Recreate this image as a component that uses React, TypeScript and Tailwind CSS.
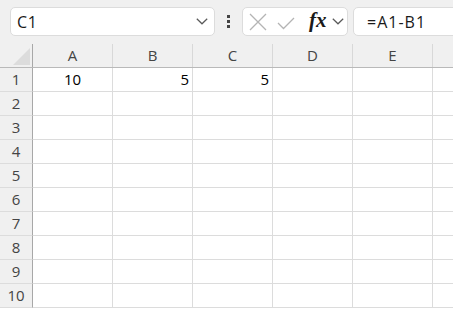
import React from "react";

const cols = ["A", "B", "C", "D", "E", ""];
const rows = [1, 2, 3, 4, 5, 6, 7, 8, 9, 10];

function Chevron({ className }: { className?: string }) {
  return (
    <svg width="12" height="7" viewBox="0 0 12 7" className={className}>
      <path d="M0.8 0.8 L6 5.8 L11.2 0.8" fill="none" stroke="#5a5a5a" strokeWidth="1.2" />
    </svg>
  );
}

export default function App() {
  const font = { fontFamily: '"Open Sans", "Liberation Sans", sans-serif' };
  return (
    <div className="w-[453px] h-[309px] overflow-hidden bg-white" style={font}>
      {/* top bar */}
      <div className="h-[44px] bg-[#f0f0f0] flex items-start pt-[7px]">
        <div className="ml-[10px] w-[205px] h-[29px] bg-white border border-[#dcdcdc] rounded-[5px] flex items-center justify-between pl-[6px] pr-[6px]">
          <span className="text-[16px] tracking-[0.6px] text-[#1a1a1a] leading-none">C1</span>
          <Chevron />
        </div>
        <div className="w-[27px] h-[29px] flex flex-col items-center justify-center gap-[2px]">
          <div className="w-[3px] h-[3px] bg-[#444]" />
          <div className="w-[3px] h-[3px] bg-[#444]" />
          <div className="w-[3px] h-[3px] bg-[#444]" />
        </div>
        <div className="w-[106px] h-[29px] bg-white border border-[#dcdcdc] rounded-[5px] flex items-center pl-[6px]">
          <svg width="18" height="18" viewBox="0 0 18 18">
            <path d="M1 1 L17 17 M17 1 L1 17" stroke="#b4b4b4" strokeWidth="1.3" fill="none" />
          </svg>
          <svg width="18" height="13" viewBox="0 0 18 13" className="ml-[10px] mt-[4px]">
            <path d="M1 6 L6.5 11.5 L17 1" stroke="#b4b4b4" strokeWidth="1.3" fill="none" />
          </svg>
          <span
            className="ml-[14px] text-[21px] leading-none italic font-semibold text-[#1a1a1a] mt-[-3px]"
            style={{ fontFamily: '"Liberation Serif", "DejaVu Serif", serif' }}
          >
            fx
          </span>
          <Chevron className="ml-[5px]" />
        </div>
        <div className="ml-[5px] flex-1 mr-[-10px] h-[29px] bg-white border border-[#dcdcdc] rounded-[5px] flex items-center pl-[13px]">
          <span className="text-[16px] tracking-[1px] text-[#1a1a1a] leading-none">=A1-B1</span>
        </div>
      </div>
      {/* header row */}
      <div className="flex h-[24px] bg-[#f0f0f0] border-b border-[#b9b9b9]">
        <div className="w-[33px] shrink-0 border-r border-[#a8a8a8] flex items-end justify-end pb-[2px] pr-[2px]">
          <svg width="17" height="17" viewBox="0 0 17 17">
            <path d="M17 0 L17 17 L0 17 Z" fill="#dcdcdc" />
          </svg>
        </div>
        {cols.map((c, i) => (
          <div
            key={i}
            className="w-[80px] shrink-0 border-r border-[#d8d8d8] flex items-center justify-center text-[15px] text-[#444]"
          >
            {c}
          </div>
        ))}
      </div>
      {rows.map((r) => (
        <div key={r} className="flex h-[24px]">
          <div className="w-[33px] shrink-0 bg-[#f0f0f0] border-r border-[#a8a8a8] border-b border-b-[#dcdcdc] flex items-center justify-center text-[15px] text-[#444]">
            {r}
          </div>
          {cols.map((c, i) => {
            let content: React.ReactNode = null;
            let align = "justify-end";
            if (r === 1 && i === 0) {
              content = "10";
              align = "justify-center";
            } else if (r === 1 && (i === 1 || i === 2)) {
              content = "5";
            }
            return (
              <div
                key={i}
                className={`w-[80px] shrink-0 border-r border-b border-[#dcdcdc] flex items-center px-[3px] text-[15px] text-black ${align}`}
              >
                {content}
              </div>
            );
          })}
        </div>
      ))}
    </div>
  );
}
